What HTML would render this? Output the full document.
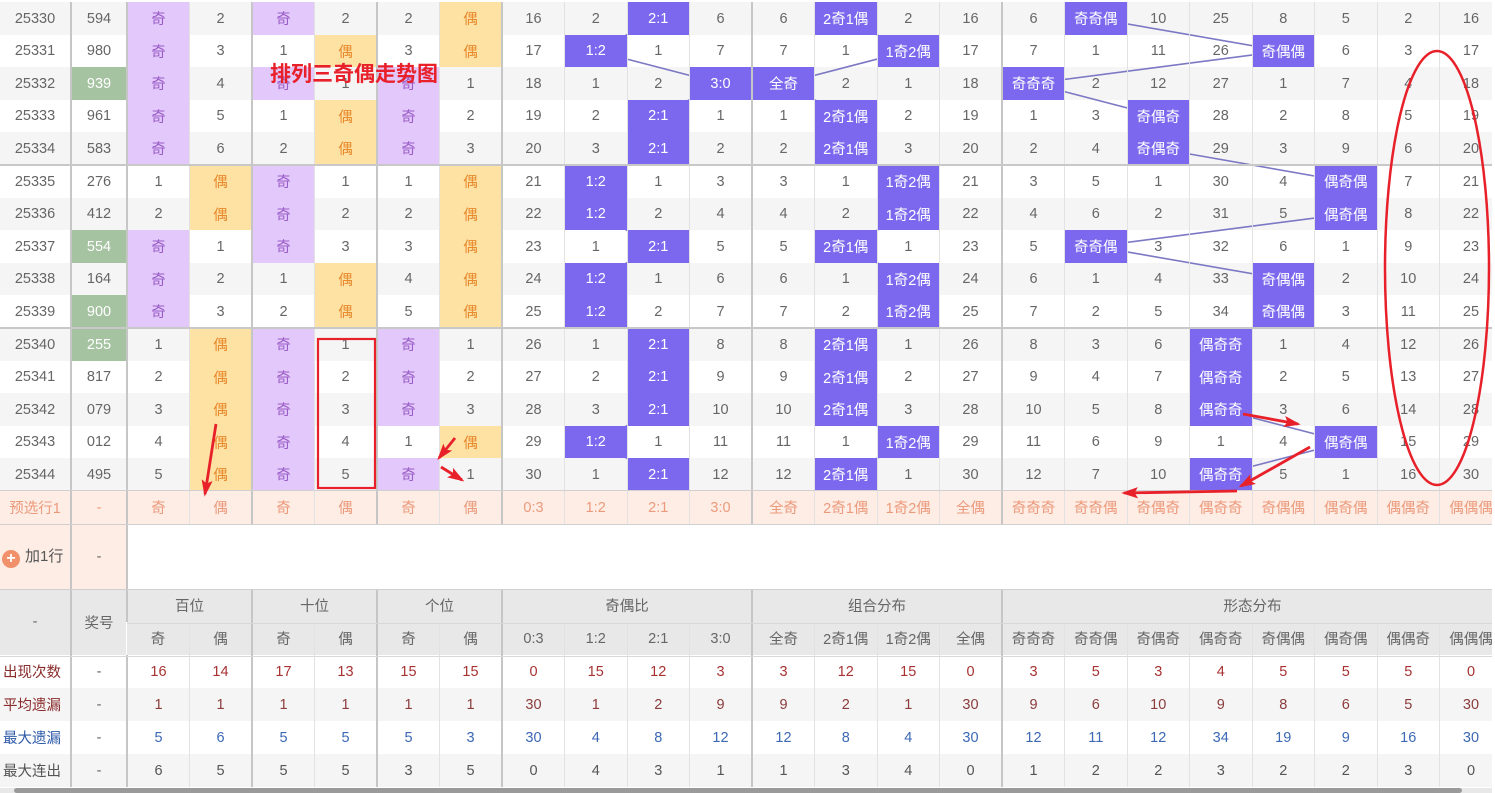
<!DOCTYPE html>
<html><head><meta charset="utf-8">
<style>
*{margin:0;padding:0;box-sizing:border-box}
body{width:1495px;height:793px;overflow:hidden;background:#fff;font-family:"Liberation Sans","Noto Sans CJK SC",sans-serif;font-size:14.5px;color:#666;position:relative}
#wrap{position:absolute;left:0;top:0;width:1492px;height:793px;overflow:hidden}
.stripe{position:absolute;left:0;width:1502px;background:#f5f5f5}
.sep{position:absolute;left:0;width:1502px;height:2px;background:#c8c8c8}
table{position:absolute;left:0;top:2px;width:1502px;table-layout:fixed;border-collapse:collapse}
td{text-align:center;vertical-align:middle;border-left:1px solid #e2e2e2;padding:0;white-space:nowrap;overflow:hidden}
tr td:first-child{border-left:0}
tr.d td:nth-child(2),tr.d td:nth-child(3),tr.d td:nth-child(5),tr.d td:nth-child(7),tr.d td:nth-child(9),tr.d td:nth-child(13),tr.d td:nth-child(17),.s{border-left:2px solid #c6c6c6}
tr.a{height:33px}tr.b2{height:32px}
.q{background:#e2c8fb;color:#9a5cc6}
.o{background:#fde2a4;color:#e8892c}
.b{background:#7b68ee;color:#fff}
.g{background:#a5c2a1;color:#fff}
tr.p td{background:#fdede5;color:#ec9a7c;height:33px}
tr.hd td{background:#e8e8e8;color:#666;height:33px}
tr.st td{height:33px}
tr.st.alt td{background:#f5f5f5}
.r1 td{color:#a83232}.r2 td{color:#8b3c3c}.r3 td{color:#3c68b4}.r4 td{color:#555}
.r1 td:first-child,.r2 td:first-child{color:#8b2c2c;text-align:left;padding-left:3px}
.r3 td:first-child{color:#2f5aa8;text-align:left;padding-left:3px}
.r4 td:first-child{color:#555;text-align:left;padding-left:3px}
tr.st td:nth-child(2){color:#666}
.plus{display:inline-block;width:18px;height:18px;border-radius:50%;background:#f0916c;color:#fff;font-size:16px;line-height:18px;text-align:center;vertical-align:-2px;margin-right:5px;font-weight:bold}
</style></head><body>
<div id="wrap">
<div class="stripe" style="top:2px;height:33px"></div>
<div class="stripe" style="top:67px;height:33px"></div>
<div class="stripe" style="top:132px;height:33px"></div>
<div class="stripe" style="top:198px;height:32px"></div>
<div class="stripe" style="top:263px;height:32px"></div>
<div class="stripe" style="top:328px;height:33px"></div>
<div class="stripe" style="top:393px;height:33px"></div>
<div class="stripe" style="top:458px;height:33px"></div>
<svg style="position:absolute;left:0;top:0" width="1502" height="500">
<g fill="none" stroke="#7b78c4" stroke-width="1.6">
<polyline points="658.25,18.5 595.75,51 720.75,83.5 658.25,116 658.25,148.5 595.75,181.5 595.75,214 658.25,246.5 595.75,279 595.75,311.5 658.25,344.5 658.25,377 658.25,409.5 595.75,442 658.25,474.5"/>
<polyline points="845.75,18.5 908.25,51 783.25,83.5 845.75,116 845.75,148.5 908.25,181.5 908.25,214 845.75,246.5 908.25,279 908.25,311.5 845.75,344.5 845.75,377 845.75,409.5 908.25,442 845.75,474.5"/>
<polyline points="1095.75,18.5 1283.25,51 1033.25,83.5 1158.25,116 1158.25,148.5 1345.75,181.5 1345.75,214 1095.75,246.5 1283.25,279 1283.25,311.5 1220.75,344.5 1220.75,377 1220.75,409.5 1345.75,442 1220.75,474.5"/>
</g></svg>
<table>
<colgroup><col style="width:71px"><col style="width:56px"><col span="22" style="width:62.5px"></colgroup>
<tr class="d a"><td>25330</td><td>594</td><td class="q">奇</td><td>2</td><td class="q">奇</td><td>2</td><td>2</td><td class="o">偶</td><td>16</td><td>2</td><td class="b">2:1</td><td>6</td><td>6</td><td class="b">2奇1偶</td><td>2</td><td>16</td><td>6</td><td class="b">奇奇偶</td><td>10</td><td>25</td><td>8</td><td>5</td><td>2</td><td>16</td></tr>
<tr class="d b2"><td>25331</td><td>980</td><td class="q">奇</td><td>3</td><td>1</td><td class="o">偶</td><td>3</td><td class="o">偶</td><td>17</td><td class="b">1:2</td><td>1</td><td>7</td><td>7</td><td>1</td><td class="b">1奇2偶</td><td>17</td><td>7</td><td>1</td><td>11</td><td>26</td><td class="b">奇偶偶</td><td>6</td><td>3</td><td>17</td></tr>
<tr class="d a"><td>25332</td><td class="g">939</td><td class="q">奇</td><td>4</td><td class="q">奇</td><td>1</td><td class="q">奇</td><td>1</td><td>18</td><td>1</td><td>2</td><td class="b">3:0</td><td class="b">全奇</td><td>2</td><td>1</td><td>18</td><td class="b">奇奇奇</td><td>2</td><td>12</td><td>27</td><td>1</td><td>7</td><td>4</td><td>18</td></tr>
<tr class="d b2"><td>25333</td><td>961</td><td class="q">奇</td><td>5</td><td>1</td><td class="o">偶</td><td class="q">奇</td><td>2</td><td>19</td><td>2</td><td class="b">2:1</td><td>1</td><td>1</td><td class="b">2奇1偶</td><td>2</td><td>19</td><td>1</td><td>3</td><td class="b">奇偶奇</td><td>28</td><td>2</td><td>8</td><td>5</td><td>19</td></tr>
<tr class="d a"><td>25334</td><td>583</td><td class="q">奇</td><td>6</td><td>2</td><td class="o">偶</td><td class="q">奇</td><td>3</td><td>20</td><td>3</td><td class="b">2:1</td><td>2</td><td>2</td><td class="b">2奇1偶</td><td>3</td><td>20</td><td>2</td><td>4</td><td class="b">奇偶奇</td><td>29</td><td>3</td><td>9</td><td>6</td><td>20</td></tr>
<tr class="d a"><td>25335</td><td>276</td><td>1</td><td class="o">偶</td><td class="q">奇</td><td>1</td><td>1</td><td class="o">偶</td><td>21</td><td class="b">1:2</td><td>1</td><td>3</td><td>3</td><td>1</td><td class="b">1奇2偶</td><td>21</td><td>3</td><td>5</td><td>1</td><td>30</td><td>4</td><td class="b">偶奇偶</td><td>7</td><td>21</td></tr>
<tr class="d b2"><td>25336</td><td>412</td><td>2</td><td class="o">偶</td><td class="q">奇</td><td>2</td><td>2</td><td class="o">偶</td><td>22</td><td class="b">1:2</td><td>2</td><td>4</td><td>4</td><td>2</td><td class="b">1奇2偶</td><td>22</td><td>4</td><td>6</td><td>2</td><td>31</td><td>5</td><td class="b">偶奇偶</td><td>8</td><td>22</td></tr>
<tr class="d a"><td>25337</td><td class="g">554</td><td class="q">奇</td><td>1</td><td class="q">奇</td><td>3</td><td>3</td><td class="o">偶</td><td>23</td><td>1</td><td class="b">2:1</td><td>5</td><td>5</td><td class="b">2奇1偶</td><td>1</td><td>23</td><td>5</td><td class="b">奇奇偶</td><td>3</td><td>32</td><td>6</td><td>1</td><td>9</td><td>23</td></tr>
<tr class="d b2"><td>25338</td><td>164</td><td class="q">奇</td><td>2</td><td>1</td><td class="o">偶</td><td>4</td><td class="o">偶</td><td>24</td><td class="b">1:2</td><td>1</td><td>6</td><td>6</td><td>1</td><td class="b">1奇2偶</td><td>24</td><td>6</td><td>1</td><td>4</td><td>33</td><td class="b">奇偶偶</td><td>2</td><td>10</td><td>24</td></tr>
<tr class="d a"><td>25339</td><td class="g">900</td><td class="q">奇</td><td>3</td><td>2</td><td class="o">偶</td><td>5</td><td class="o">偶</td><td>25</td><td class="b">1:2</td><td>2</td><td>7</td><td>7</td><td>2</td><td class="b">1奇2偶</td><td>25</td><td>7</td><td>2</td><td>5</td><td>34</td><td class="b">奇偶偶</td><td>3</td><td>11</td><td>25</td></tr>
<tr class="d a"><td>25340</td><td class="g">255</td><td>1</td><td class="o">偶</td><td class="q">奇</td><td>1</td><td class="q">奇</td><td>1</td><td>26</td><td>1</td><td class="b">2:1</td><td>8</td><td>8</td><td class="b">2奇1偶</td><td>1</td><td>26</td><td>8</td><td>3</td><td>6</td><td class="b">偶奇奇</td><td>1</td><td>4</td><td>12</td><td>26</td></tr>
<tr class="d b2"><td>25341</td><td>817</td><td>2</td><td class="o">偶</td><td class="q">奇</td><td>2</td><td class="q">奇</td><td>2</td><td>27</td><td>2</td><td class="b">2:1</td><td>9</td><td>9</td><td class="b">2奇1偶</td><td>2</td><td>27</td><td>9</td><td>4</td><td>7</td><td class="b">偶奇奇</td><td>2</td><td>5</td><td>13</td><td>27</td></tr>
<tr class="d a"><td>25342</td><td>079</td><td>3</td><td class="o">偶</td><td class="q">奇</td><td>3</td><td class="q">奇</td><td>3</td><td>28</td><td>3</td><td class="b">2:1</td><td>10</td><td>10</td><td class="b">2奇1偶</td><td>3</td><td>28</td><td>10</td><td>5</td><td>8</td><td class="b">偶奇奇</td><td>3</td><td>6</td><td>14</td><td>28</td></tr>
<tr class="d b2"><td>25343</td><td>012</td><td>4</td><td class="o">偶</td><td class="q">奇</td><td>4</td><td>1</td><td class="o">偶</td><td>29</td><td class="b">1:2</td><td>1</td><td>11</td><td>11</td><td>1</td><td class="b">1奇2偶</td><td>29</td><td>11</td><td>6</td><td>9</td><td>1</td><td>4</td><td class="b">偶奇偶</td><td>15</td><td>29</td></tr>
<tr class="d a"><td>25344</td><td>495</td><td>5</td><td class="o">偶</td><td class="q">奇</td><td>5</td><td class="q">奇</td><td>1</td><td>30</td><td>1</td><td class="b">2:1</td><td>12</td><td>12</td><td class="b">2奇1偶</td><td>1</td><td>30</td><td>12</td><td>7</td><td>10</td><td class="b">偶奇奇</td><td>5</td><td>1</td><td>16</td><td>30</td></tr>
<tr class="d p"><td>预选行1</td><td>-</td><td>奇</td><td>偶</td><td>奇</td><td>偶</td><td>奇</td><td>偶</td><td>0:3</td><td>1:2</td><td>2:1</td><td>3:0</td><td>全奇</td><td>2奇1偶</td><td>1奇2偶</td><td>全偶</td><td>奇奇奇</td><td>奇奇偶</td><td>奇偶奇</td><td>偶奇奇</td><td>奇偶偶</td><td>偶奇偶</td><td>偶偶奇</td><td>偶偶偶</td></tr>
<tr style="height:65px"><td style="background:#fdede5;color:#555;text-align:left;padding-left:2px;border-left:0;font-size:15px"><span class="plus">+</span>加1行</td><td class="s" style="background:#fdede5">-</td><td class="s" colspan="22"></td></tr>
<tr class="hd"><td rowspan="2" style="border-left:0">-</td><td rowspan="2" class="s">奖号</td><td colspan="2" class="s">百位</td><td colspan="2" class="s">十位</td><td colspan="2" class="s">个位</td><td colspan="4" class="s">奇偶比</td><td colspan="4" class="s">组合分布</td><td colspan="8" class="s">形态分布</td></tr>
<tr class="hd"><td class="s">奇</td><td>偶</td><td class="s">奇</td><td>偶</td><td class="s">奇</td><td>偶</td><td class="s">0:3</td><td>1:2</td><td>2:1</td><td>3:0</td><td class="s">全奇</td><td>2奇1偶</td><td>1奇2偶</td><td>全偶</td><td class="s">奇奇奇</td><td>奇奇偶</td><td>奇偶奇</td><td>偶奇奇</td><td>奇偶偶</td><td>偶奇偶</td><td>偶偶奇</td><td>偶偶偶</td></tr>
<tr class="d st r1"><td>出现次数</td><td>-</td><td>16</td><td>14</td><td>17</td><td>13</td><td>15</td><td>15</td><td>0</td><td>15</td><td>12</td><td>3</td><td>3</td><td>12</td><td>15</td><td>0</td><td>3</td><td>5</td><td>3</td><td>4</td><td>5</td><td>5</td><td>5</td><td>0</td></tr>
<tr class="d st alt r2"><td>平均遗漏</td><td>-</td><td>1</td><td>1</td><td>1</td><td>1</td><td>1</td><td>1</td><td>30</td><td>1</td><td>2</td><td>9</td><td>9</td><td>2</td><td>1</td><td>30</td><td>9</td><td>6</td><td>10</td><td>9</td><td>8</td><td>6</td><td>5</td><td>30</td></tr>
<tr class="d st r3"><td>最大遗漏</td><td>-</td><td>5</td><td>6</td><td>5</td><td>5</td><td>5</td><td>3</td><td>30</td><td>4</td><td>8</td><td>12</td><td>12</td><td>8</td><td>4</td><td>30</td><td>12</td><td>11</td><td>12</td><td>34</td><td>19</td><td>9</td><td>16</td><td>30</td></tr>
<tr class="d st alt r4"><td>最大连出</td><td>-</td><td>6</td><td>5</td><td>5</td><td>5</td><td>3</td><td>5</td><td>0</td><td>4</td><td>3</td><td>1</td><td>1</td><td>3</td><td>4</td><td>0</td><td>1</td><td>2</td><td>2</td><td>3</td><td>2</td><td>2</td><td>3</td><td>0</td></tr>
</table>
<div class="sep" style="top:164px"></div>
<div class="sep" style="top:327px"></div>
<div class="sep" style="top:490px;height:1px;background:#d0d0d0"></div>
<div class="sep" style="top:524px;height:1px;background:#d0d0d0"></div>
<div class="sep" style="top:589px;height:1px;background:#d0d0d0"></div>
<div style="position:absolute;left:127px;top:623px;width:1380px;height:1px;background:#d8d8d8"></div>
<div style="position:absolute;left:0;top:656px;width:1502px;height:1px;background:#d8d8d8"></div>
<div style="position:absolute;left:0;top:788px;width:1492px;height:5px;background:#e8e8e8"></div>
<div style="position:absolute;left:14px;top:788px;width:1448px;height:5px;background:#9a9a9a;border-radius:3px"></div>
<svg style="position:absolute;left:0;top:0" width="1495" height="793">
<defs><marker id="ah" markerWidth="6" markerHeight="4" refX="5" refY="2" orient="auto" markerUnits="strokeWidth"><path d="M0,0 L6,2 L0,4 L1.2,2 Z" fill="#e8202a"/></marker></defs>
<text x="270" y="81" font-family="Liberation Sans,Noto Sans CJK SC,sans-serif" font-size="21" font-weight="bold" fill="#e8202a">排列三奇偶走势图</text>
<rect x="318" y="339" width="57" height="149" fill="none" stroke="#e8202a" stroke-width="2.2"/>
<ellipse cx="1437" cy="268" rx="52" ry="217" fill="none" stroke="#e8202a" stroke-width="2.5"/>
<g stroke="#e8202a" stroke-width="2.8" fill="none" marker-end="url(#ah)">
<line x1="216" y1="424" x2="205" y2="494"/>
<line x1="455" y1="438" x2="439" y2="458"/>
<line x1="441" y1="467" x2="462" y2="480"/>
<line x1="1243" y1="414" x2="1298" y2="424"/>
<line x1="1310" y1="447" x2="1241" y2="486"/>
<line x1="1237" y1="491" x2="1124" y2="493"/>
</g>
</svg>
</div>
</body></html>
